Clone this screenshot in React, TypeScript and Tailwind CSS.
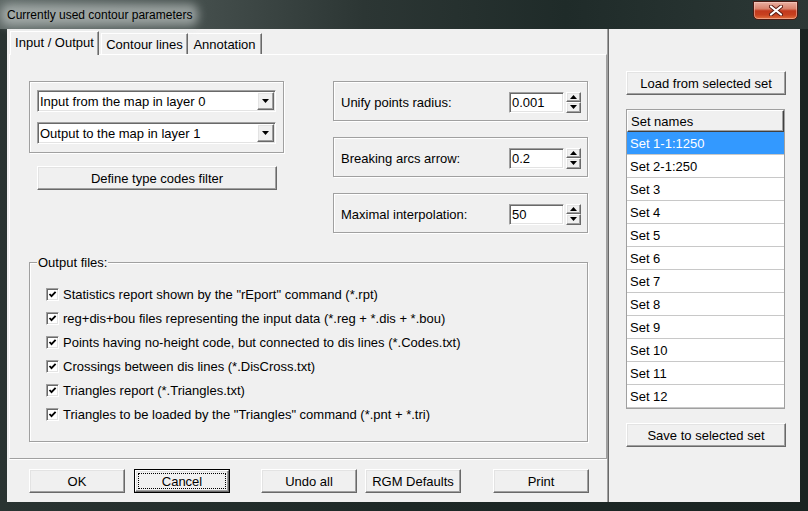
import React from 'react';

// classic 3D edges
const raised =
  'border border-t-white border-l-white border-r-[#696969] border-b-[#696969] shadow-[inset_-1px_-1px_0_#a0a0a0,inset_1px_1px_0_#e3e3e3]';
const sunken =
  'border border-t-[#a0a0a0] border-l-[#a0a0a0] border-r-white border-b-white shadow-[inset_1px_1px_0_#696969,inset_-1px_-1px_0_#e3e3e3]';
const etched = 'border border-[#a0a0a0] shadow-[1px_1px_0_#fff,inset_1px_1px_0_#fff]';

const setNames = [
  'Set 1-1:1250',
  'Set 2-1:250',
  'Set 3',
  'Set 4',
  'Set 5',
  'Set 6',
  'Set 7',
  'Set 8',
  'Set 9',
  'Set 10',
  'Set 11',
  'Set 12',
];

const outputFiles = [
  'Statistics report shown by the "rEport" command (*.rpt)',
  'reg+dis+bou files representing the input data (*.reg + *.dis + *.bou)',
  'Points having no-height code, but connected to dis lines (*.Codes.txt)',
  'Crossings between dis lines (*.DisCross.txt)',
  'Triangles report (*.Triangles.txt)',
  'Triangles to be loaded by the "Triangles" command (*.pnt + *.tri)',
];

const Button: React.FC<{ label: string; className?: string; focused?: boolean }> = ({
  label,
  className = '',
  focused = false,
}) => {
  if (focused) {
    return (
      <div className={`border border-black ${className}`}>
        <div className={`h-full w-full bg-[#f0f0f0] p-[2px] ${raised}`}>
          <div className="h-full w-full flex items-center justify-center border border-dotted border-black">
            {label}
          </div>
        </div>
      </div>
    );
  }
  return (
    <div className={`flex items-center justify-center bg-[#f0f0f0] ${raised} ${className}`}>{label}</div>
  );
};

const Combo: React.FC<{ text: string }> = ({ text }) => (
  <div className={`h-[22px] w-[239px] flex bg-white ${sunken}`}>
    <div className="flex-1 flex items-center pl-[2px] leading-[15px]">{text}</div>
    <div className={`w-[17px] my-[1px] mr-[1px] flex items-center justify-center bg-[#f0f0f0] ${raised}`}>
      <svg width="7" height="4" viewBox="0 0 7 4">
        <polygon points="0,0 7,0 3.5,4" fill="#000" />
      </svg>
    </div>
  </div>
);

const SpinGroup: React.FC<{ label: string; value: string }> = ({ label, value }) => (
  <div className={`w-[255px] h-[40px] flex items-center pl-[7px] pr-[6px] pt-[2px] ${etched}`}>
    <div className="flex-1">{label}</div>
    <div className={`w-[55px] h-[21px] bg-white flex items-center pl-[2px] ${sunken}`}>{value}</div>
    <div className="ml-[2px] w-[15px] h-[21px] flex flex-col">
      <div className={`flex-1 flex items-center justify-center bg-[#f0f0f0] ${raised}`}>
        <svg width="7" height="4" viewBox="0 0 7 4">
          <polygon points="0,4 7,4 3.5,0" fill="#000" />
        </svg>
      </div>
      <div className={`flex-1 flex items-center justify-center bg-[#f0f0f0] ${raised}`}>
        <svg width="7" height="4" viewBox="0 0 7 4">
          <polygon points="0,0 7,0 3.5,4" fill="#000" />
        </svg>
      </div>
    </div>
  </div>
);

const Checkbox: React.FC = () => (
  <div className={`w-[13px] h-[13px] bg-white flex items-center justify-center ${sunken}`}>
    <svg width="9" height="9" viewBox="0 0 9 9">
      <polyline points="1.5,4 3.5,6.2 7.6,1.8" fill="none" stroke="#000" strokeWidth="1.8" />
    </svg>
  </div>
);

const CloseButton: React.FC = () => (
  <div className="absolute left-[753px] top-[1px] w-[45px] h-[19px] rounded-b-[5px] border border-[#4a1a12] bg-[linear-gradient(180deg,#e9b0a2_0%,#d9826c_40%,#c2391d_52%,#c8401f_75%,#e0703e_100%)] flex items-center justify-center shadow-[inset_0_0_0_1px_rgba(255,220,210,0.45)]">
    <svg width="14" height="11" viewBox="0 0 14 11">
      <path d="M2 1.5 L12 9.5 M12 1.5 L2 9.5" stroke="#5a1a10" strokeWidth="4" strokeLinecap="round" />
      <path d="M2 1.5 L12 9.5 M12 1.5 L2 9.5" stroke="#fff" strokeWidth="2.2" strokeLinecap="round" />
    </svg>
  </div>
);

export default function App() {
  return (
    <div className="relative w-[808px] h-[511px] overflow-hidden bg-[linear-gradient(90deg,#2a3432_0%,#1d2826_50%,#1a2422_100%)] font-['Liberation_Sans',Arial,sans-serif] text-[13px] text-black">
      {/* title bar */}
      <div className="h-[29px] bg-[linear-gradient(90deg,#5e6866_0%,#4a5452_20%,#2c3634_45%,#1f2b29_70%,#2c3836_100%)]">
        <div className="relative inline-block ml-[7px] mt-[7px]">
          <div className="absolute -inset-x-[6px] -inset-y-[3px] rounded-[8px] bg-[rgba(205,212,210,0.6)] blur-[5px]" />
          <div className="relative text-[12px] leading-[16px] text-black">Currently used contour parameters</div>
        </div>
      </div>
      <CloseButton />

      {/* client area */}
      <div className="ml-[7px] w-[793px] h-[473px] bg-[#f0f0f0] flex leading-[15px]">
        {/* left: tabs + buttons */}
        <div className="w-[600px] flex flex-col">
          <div className="h-[25px] flex items-end pl-[3px]">
            <div className="relative z-10 -mb-[1px] w-[89px] h-[24px] flex items-center justify-center pb-[2px] bg-[#f0f0f0] border-t border-l border-r border-t-white border-l-white border-r-[#696969] shadow-[inset_-1px_0_0_#a0a0a0]">
              Input / Output
            </div>
            <div className="ml-[2px] w-[87px] h-[21px] flex items-center justify-center bg-[#f0f0f0] border-t border-l border-r border-t-white border-l-white border-r-[#696969] shadow-[inset_-1px_0_0_#a0a0a0]">
              Contour lines
            </div>
            <div className="w-[74px] h-[21px] flex items-center justify-center bg-[#f0f0f0] border-t border-r border-t-white border-r-[#696969] shadow-[inset_-1px_0_0_#a0a0a0]">
              Annotation
            </div>
          </div>

          <div className="ml-[2px] w-[598px] h-[405px] border border-t-white border-l-white border-r-[#a0a0a0] border-b-[#a0a0a0] shadow-[0_1px_0_#fff] pt-[26px] pl-[19px] flex flex-col">
            <div className="flex items-start gap-[49px]">
              <div className="flex flex-col">
                <div className={`w-[255px] h-[72px] pl-[7px] pt-[8px] flex flex-col gap-[10px] ${etched}`}>
                  <Combo text="Input from the map in layer 0" />
                  <Combo text="Output to the map in layer 1" />
                </div>
                <Button label="Define type codes filter" className="ml-[8px] mt-[13px] w-[240px] h-[24px]" />
              </div>
              <div className="flex flex-col gap-[16px]">
                <SpinGroup label="Unify points radius:" value="0.001" />
                <SpinGroup label="Breaking arcs arrow:" value="0.2" />
                <SpinGroup label="Maximal interpolation:" value="50" />
              </div>
            </div>

            <div className={`relative mt-[29px] w-[559px] h-[180px] pl-[16px] pt-[19px] flex flex-col ${etched}`}>
              <div className="absolute left-[7px] top-[-8px] px-[1px] bg-[#f0f0f0]">Output files:</div>
              {outputFiles.map((f) => (
                <div key={f} className="h-[24px] flex items-center gap-[4px]">
                  <Checkbox />
                  <span>{f}</span>
                </div>
              ))}
            </div>
          </div>

          <div className="flex pt-[10px] pl-[22px]">
            <Button label="OK" className="w-[96px] h-[24px]" />
            <Button label="Cancel" focused className="ml-[9px] w-[96px] h-[24px]" />
            <Button label="Undo all" className="ml-[31px] w-[96px] h-[24px]" />
            <Button label="RGM Defaults" className="ml-[8px] w-[96px] h-[24px]" />
            <Button label="Print" className="ml-[32px] w-[96px] h-[24px]" />
          </div>
        </div>

        {/* divider */}
        <div className="w-[2px] border-l border-r border-l-[#a0a0a0] border-r-[#696969]" />

        {/* right: sets */}
        <div className="w-[191px] flex flex-col pl-[17px] pt-[42px]">
          <Button label="Load from selected set" className="w-[160px] h-[24px]" />
          <div className="mt-[14px] w-[159px] h-[300px] bg-white border border-[#a0a0a0] flex flex-col">
            <div className="h-[22px] flex items-center pl-[3px] bg-[#f0f0f0] border border-t-white border-l-white border-r-[#404040] border-b-[#404040] shadow-[inset_-1px_-1px_0_#a0a0a0]">
              Set names
            </div>
            {setNames.map((s, i) => (
              <div
                key={s}
                className={`h-[23px] shrink-0 flex items-center pl-[3px] border-b border-[#c8c8c8] ${
                  i === 0 ? 'bg-[#3399ff] text-white' : ''
                }`}
              >
                {s}
              </div>
            ))}
          </div>
          <Button label="Save to selected set" className="mt-[14px] w-[160px] h-[24px]" />
        </div>
      </div>
    </div>
  );
}
